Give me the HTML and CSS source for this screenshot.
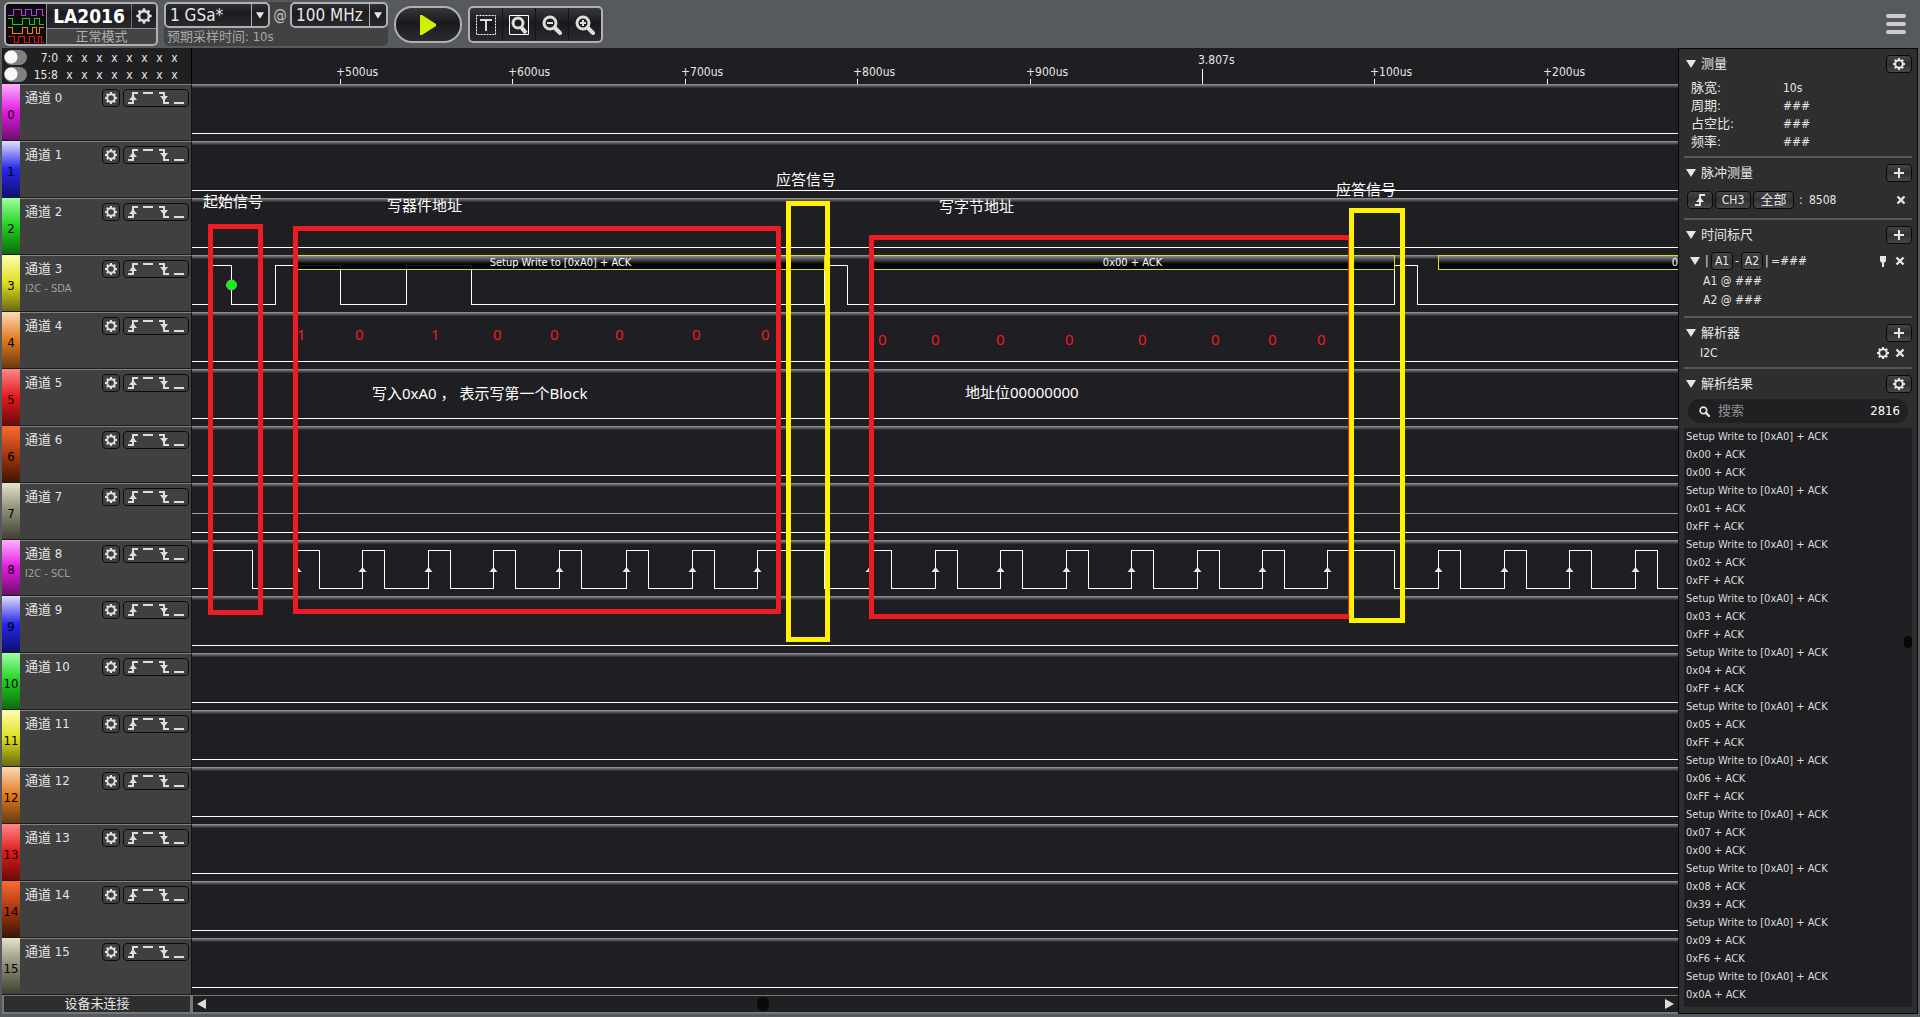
FILE: index.html
```html
<!DOCTYPE html>
<html lang="zh-CN">
<head>
<meta charset="utf-8">
<title>LA2016</title>
<link rel="stylesheet" href="styles.css">
</head>
<body>
<svg class="defs" aria-hidden="true">
  <symbol id="gear" viewBox="0 0 14 14"><path fill="none" stroke="currentColor" stroke-width="2" d="M7 3.2a3.8 3.8 0 1 1 0 7.6a3.8 3.8 0 1 1 0-7.6z"/><path stroke="currentColor" stroke-width="2" d="M7 1v2M7 11v2M1 7h2M11 7h2M2.8 2.8l1.3 1.3M9.9 9.9l1.3 1.3M2.8 11.2l1.3-1.3M9.9 4.1l1.3-1.3"/></symbol>
  <symbol id="rise" viewBox="0 0 12 14"><path fill="none" stroke="currentColor" stroke-width="2" d="M1 12h5V2h5"/><path fill="currentColor" d="M6 4l4 5H2z"/></symbol>
  <symbol id="high" viewBox="0 0 12 14"><path stroke="currentColor" stroke-width="2" d="M1 2h10"/></symbol>
  <symbol id="fall" viewBox="0 0 12 14"><path fill="none" stroke="currentColor" stroke-width="2" d="M1 2h5v10h5"/><path fill="currentColor" d="M6 10l4-5H2z"/></symbol>
  <symbol id="low" viewBox="0 0 12 14"><path stroke="currentColor" stroke-width="2" d="M1 12h10"/></symbol>
  <symbol id="plus" viewBox="0 0 12 12"><path stroke="currentColor" stroke-width="2" d="M1 6h10M6 1v10"/></symbol>
  <symbol id="cross" viewBox="0 0 12 12"><path stroke="currentColor" stroke-width="2.4" d="M2.5 2.5l7 7M9.5 2.5l-7 7"/></symbol>
  <symbol id="tri" viewBox="0 0 10 8"><path fill="currentColor" d="M0 0h10L5 8z"/></symbol>
  <symbol id="lens" viewBox="0 0 20 20"><circle cx="8" cy="8" r="6" fill="none" stroke="currentColor" stroke-width="3"/><path stroke="currentColor" stroke-width="4" stroke-linecap="round" d="M13 13l5 5"/></symbol>
</svg>

<header class="toolbar">
  <div class="device">
    <svg class="logo" viewBox="0 0 40 40" aria-hidden="true">
      <path stroke="#c030f0" d="M2 11h5V5h8v6h4V5h6v6h5V5h6v6h2"/>
      <path stroke="#10d010" d="M2 14h4v6h10v-6h7v6h5v-6h5v6h5"/>
      <path stroke="#f08010" d="M2 23h4v6h10v-6h5v6h5v-6h4v6h3v-6h5"/>
      <path stroke="#e01010" d="M2 32h6v6h4v-6h6v6h5v-6h5v6h4v-6h3v6h3"/>
    </svg>
    <div class="device-main">
      <div class="device-row"><strong>LA2016</strong><button class="device-gear" aria-label="设备设置"><svg width="18" height="18"><use href="#gear"/></svg></button></div>
      <div class="mode">正常模式</div>
    </div>
  </div>
  <div class="sampling">
    <div class="sampling-row">
      <span class="pick depth"><select aria-label="采样深度"><option>1 GSa*</option></select><svg width="8" height="7"><use href="#tri"/></svg></span>
      <span class="at">@</span>
      <span class="pick rate"><select aria-label="采样率"><option>100 MHz</option></select><svg width="8" height="7"><use href="#tri"/></svg></span>
    </div>
    <div class="estimate">预期采样时间: 10s</div>
  </div>
  <button class="play" aria-label="开始"><svg width="18" height="20" viewBox="0 0 18 20"><path fill="#d0f000" d="M1 0h2l14 9v2L3 20H1z"/></svg></button>
  <div class="tools">
    <button aria-label="时间标尺"><svg width="20" height="20" viewBox="0 0 20 20"><path fill="none" stroke="#fff" stroke-dasharray="2 1" d="M.5.5h19v19H.5z"/><path stroke="#ddd" stroke-width="2" d="M4 5h12M10 5v11"/></svg></button>
    <button aria-label="缩放全部"><svg width="20" height="20" viewBox="0 0 20 20"><path fill="none" stroke="#fff" d="M.5.5h19v19H.5z"/><circle cx="9" cy="8" r="5" fill="none" stroke="#ddd" stroke-width="3"/><path stroke="#ddd" stroke-width="4" d="M12 12l5 6"/></svg></button>
    <button aria-label="缩小"><svg width="20" height="20"><use href="#lens"/><path stroke="#ddd" stroke-width="2" d="M5 8h6"/></svg></button>
    <button aria-label="放大"><svg width="20" height="20"><use href="#lens"/><path stroke="#ddd" stroke-width="2" d="M5 8h6M8 5v6"/></svg></button>
  </div>
  <button class="menu" aria-label="菜单"><i></i><i></i><i></i></button>
</header>

<main class="workspace">
  <div class="buses">
    <label class="bus"><input type="checkbox"><span class="bus-name">7:0</span><span class="bits"><b>x</b><b>x</b><b>x</b><b>x</b><b>x</b><b>x</b><b>x</b><b>x</b></span></label>
    <label class="bus"><input type="checkbox"><span class="bus-name">15:8</span><span class="bits"><b>x</b><b>x</b><b>x</b><b>x</b><b>x</b><b>x</b><b>x</b><b>x</b></span></label>
  </div>
  <div class="ruler" id="ruler"></div>
  <div class="channels" id="channels"></div>
  <div class="plot" id="plot"></div>
  <div class="status">设备未连接</div>
  <div class="hscroll">
    <button aria-label="向左"><svg width="9" height="10" viewBox="0 0 9 10"><path fill="#ddd" d="M9 0v10L0 5z"/></svg></button>
    <span class="hthumb"></span>
    <button aria-label="向右"><svg width="9" height="10" viewBox="0 0 9 10"><path fill="#ddd" d="M0 0v10l9-5z"/></svg></button>
  </div>

  <aside class="side">
    <section class="snug">
      <h2><svg width="10" height="8"><use href="#tri"/></svg>测量<button class="key" aria-label="测量设置"><svg width="14" height="14"><use href="#gear"/></svg></button></h2>
      <dl class="measures">
        <dt>脉宽:</dt><dd>10s</dd>
        <dt>周期:</dt><dd>###</dd>
        <dt>占空比:</dt><dd>###</dd>
        <dt>频率:</dt><dd>###</dd>
      </dl>
    </section>
    <section>
      <h2><svg width="10" height="8"><use href="#tri"/></svg>脉冲测量<button class="key" aria-label="添加"><svg width="12" height="12"><use href="#plus"/></svg></button></h2>
      <div class="pulse">
        <button class="key" aria-label="上升沿"><svg width="12" height="14"><use href="#rise"/></svg></button>
        <button class="key ch">CH3</button>
        <button class="key all">全部</button>
        <span class="colon">:</span><span>8508</span>
        <button class="bare end" aria-label="删除"><svg width="12" height="12"><use href="#cross"/></svg></button>
      </div>
    </section>
    <section>
      <h2><svg width="10" height="8"><use href="#tri"/></svg>时间标尺<button class="key" aria-label="添加"><svg width="12" height="12"><use href="#plus"/></svg></button></h2>
      <div class="markers">
        <svg width="10" height="8"><use href="#tri"/></svg><span class="bar">|</span><button class="key mark">A1</button><span>-</span><button class="key mark">A2</button><span class="bar shut">|</span><span>=###</span>
        <button class="bare end" aria-label="固定"><svg width="12" height="12" viewBox="0 0 12 12"><path fill="currentColor" d="M3 1h6v5L7 8v4H5V8L3 6z"/></svg></button>
        <button class="bare" aria-label="删除"><svg width="12" height="12"><use href="#cross"/></svg></button>
      </div>
      <div class="marker-line">A1 @ ###</div>
      <div class="marker-line">A2 @ ###</div>
    </section>
    <section class="snug">
      <h2><svg width="10" height="8"><use href="#tri"/></svg>解析器<button class="key" aria-label="添加"><svg width="12" height="12"><use href="#plus"/></svg></button></h2>
      <div class="decoder">
        <span>I2C</span>
        <button class="bare end" aria-label="解析器设置"><svg width="14" height="14"><use href="#gear"/></svg></button>
        <button class="bare" aria-label="删除"><svg width="12" height="12"><use href="#cross"/></svg></button>
      </div>
    </section>
    <section class="results">
      <h2><svg width="10" height="8"><use href="#tri"/></svg>解析结果<button class="key" aria-label="结果设置"><svg width="14" height="14"><use href="#gear"/></svg></button></h2>
      <label class="search"><svg width="11" height="11"><use href="#lens" width="11" height="11"/></svg><input type="text" placeholder="搜索" aria-label="搜索"><span>2816</span></label>
      <div class="list"><ul id="results"></ul><span class="vthumb"></span></div>
    </section>
  </aside>
</main>
<script src="app.js"></script>
</body>
</html>
```

FILE: styles.css
```css
* { box-sizing: border-box; }

body {
  margin: 0;
  min-height: 100vh;
  display: flex;
  flex-direction: column;
  background: #565a5e;
  color: #e6e6e6;
  font: 12px/18px "DejaVu Sans Condensed", "Noto Sans", "Noto Sans CJK SC", sans-serif;
}

button, input, select { font: inherit; color: inherit; padding: 0; margin: 0; }
button { display: inline-flex; align-items: center; justify-content: center; background: none; border: 0; }
svg { display: block; flex: none; }
.defs { position: absolute; width: 0; height: 0; }

/* toolbar */
.toolbar { display: flex; align-items: flex-start; height: 48px; padding: 2px 14px 0 4px; }
.device {
  display: flex; width: 154px; height: 44px; overflow: hidden;
  border: 2px solid #b0b0b0; border-radius: 5px; background: #444;
}
.logo { width: 41px; height: 40px; background: #0d0d0f; fill: none; stroke-width: 1; shape-rendering: crispEdges; border-right: 1px solid #909090; }
.device-main { flex: 1; display: flex; flex-direction: column; }
.device-row { display: flex; height: 25px; background: linear-gradient(#303036, #1c1c20 40%, #28282e); border-bottom: 1px solid #909090; }
.device-row strong { flex: 1; font-size: 19px; line-height: 24px; text-align: center; color: #fff; }
.device-gear { width: 25px; border-left: 1px solid #707070; color: #ddd; }
.mode { font-size: 13px; line-height: 15px; text-align: center; color: #b0b0b0; }
.sampling { width: 224px; height: 44px; margin-left: 6px; border-radius: 5px; background: #424242; }
.sampling-row { display: flex; justify-content: space-between; }
.pick {
  position: relative; height: 26px; border: 2px solid #b0b0b0; border-radius: 5px;
  background: linear-gradient(#303036, #1c1c20 40%, #28282e);
}
.pick.depth { width: 106px; }
.pick.rate { width: 98px; }
.pick select { appearance: none; width: 100%; height: 22px; padding-left: 4px; border: 0; background: none; font-size: 17px; line-height: 22px; }
.pick::after { content: ""; position: absolute; top: 0; bottom: 0; right: 16px; width: 1px; background: #b0b0b0; }
.pick svg { position: absolute; right: 4px; top: 8px; }
.at { font-size: 15px; line-height: 26px; color: #c0c0c0; }
.estimate { padding-left: 3px; font-size: 13px; color: #a8a8a8; }
.play, .tools {
  height: 37px; margin-top: 4px; border: 2px solid #b0b0b0;
  background: linear-gradient(#36363c, #1a1a1e 45%, #2a2a30);
}
.play { width: 68px; margin-left: 6px; border-radius: 18px; }
.tools { display: flex; width: 135px; margin-left: 6px; border-radius: 5px; color: #ddd; }
.tools button { flex: 1; border-left: 1px solid #141416; }
.tools button:first-child { border-left: 0; }
.menu { flex-direction: column; gap: 4px; margin: 12px 0 0 auto; }
.menu i { width: 20px; height: 4px; border-radius: 2px; background: #ccc; }

/* workspace */
.workspace {
  flex: 1;
  display: grid;
  grid-template-columns: 190px 1fr 240px;
  grid-template-rows: 36px 1fr 19px;
  padding: 0 2px 3px;
}
.side { grid-column: 3; grid-row: 1 / 4; }

.buses { display: flex; flex-direction: column; padding: 1px 0 0 2px; background: #202023; border-right: 1px solid #000; }
.bus { display: flex; align-items: center; height: 17px; }
.bus input { appearance: none; width: 23px; height: 15px; border-radius: 8px; background: radial-gradient(circle at 7px 7px, #f8f8f8 6px, #808080 7px); }
.bus-name { width: 31px; text-align: right; }
.bits { display: flex; margin-left: 4px; }
.bits b { width: 15px; text-align: center; font-weight: normal; }

.ruler { position: relative; background: #1f1f23; overflow: hidden; }
.tick { position: absolute; bottom: 0; width: 1px; height: 5px; background: #fff; font-style: normal; }
.tick.major { height: 15px; }
.tick span { position: absolute; left: -4px; bottom: 3px; white-space: nowrap; }
.tick.major span { bottom: 15px; }

.channels, .plot { display: grid; grid-template-rows: repeat(16, 1fr); }
.channel {
  display: grid; grid-template-columns: 18px 1fr auto auto; min-height: 46px;
  background: #404040; border-top: 1px solid #808080; border-right: 1px solid #111; border-bottom: 1px solid #1c1c1c;
}
.swatch { display: flex; align-items: center; justify-content: center; padding-top: 6px; margin-top: -1px; color: #000; font-size: 13px; }
.c0 { background: linear-gradient(#ffb0ff, #e01ae0 50%, #6a106a); }
.c1 { background: linear-gradient(#e0e0ff, #2626e8 50%, #101070); }
.c2 { background: linear-gradient(#a0ffa0, #1ed01e 50%, #0e6a0e); }
.c3 { background: linear-gradient(#ffffb0, #dede1e 50%, #6a6a10); }
.c4 { background: linear-gradient(#ffd8b8, #e07a20 50%, #6a3a10); }
.c5 { background: linear-gradient(#ff8888, #e01a1a 50%, #6a0c0c); }
.c6 { background: linear-gradient(#ff6a30, #a83810 50%, #401404); }
.c7 { background: linear-gradient(#e4e4cc, #8a8a74 50%, #404034); }
.names { padding: 4px 0 0 5px; white-space: nowrap; }
.names span { display: block; height: 20px; font-size: 13px; }
.names small { display: block; font-size: 11px; line-height: 18px; color: #a0a0a0; }
.cfg, .edges { height: 18px; margin-top: 4px; border: 1px solid #0c0c0c; border-radius: 4px; color: #ddd; }
.cfg { width: 18px; }
.edges { display: flex; justify-content: space-between; width: 66px; margin: 4px 2px 0 3px; padding: 0 3px; }

.plot { position: relative; overflow: hidden; background: #202023; }
.trace { position: relative; min-height: 46px; background: linear-gradient(#8e8c8e 1px, #6a686a 1px 2px, #504e50 2px 3px, #343336 3px 4px, #1f1f23 4px); }
.trace svg { position: absolute; top: 0; left: 0; width: 100%; height: 100%; overflow: visible; }
.wave { fill: none; stroke: #fff; shape-rendering: crispEdges; }
.wave.dim { stroke: #a0a0a0; }
.arrow { fill: #e6e6e6; }
.dot { fill: #00ff00; stroke: #a0a0a0; }
.decode {
  position: absolute; top: 0; height: 15px; border: 1px solid #dede1e;
  background: linear-gradient(#8a8a8a, rgba(0, 0, 0, .88) 60%);
  font-size: 11px; line-height: 13px; text-align: center; color: #fff;
}
.decode.running { right: 0; border-right: 0; text-align: right; }
.box { position: absolute; border: 5px solid #ed1c24; }
.box.ack { border-color: #fff200; }
.note { position: absolute; font: 15px/20px "Noto Sans", "Noto Sans CJK SC", sans-serif; color: #fff; white-space: pre; }
.note.bit { color: #ed1c24; }

.status, .hscroll { border: 2px solid #77777a; border-width: 1px 2px 2px; background: #2e2e2e; }
.status { text-align: center; font-size: 13px; line-height: 16px; }
.hscroll { display: flex; align-items: center; justify-content: space-between; position: relative; padding: 0 4px; border-width: 1px 0 2px 1px; background: #202023; }
.hthumb { position: absolute; left: 38%; width: 12px; height: 14px; border-radius: 5px; background: #0a0a0a; }

/* side panel */
.side {
  display: flex; flex-direction: column; padding: 0 5px 6px;
  background: #2e2e2e; border: 1px solid #080808;
}
.side section { padding: 5px 0 8px; border-bottom: 2px solid #56585c; }
.side section.snug { padding-bottom: 4px; }
.side section:last-child { border-bottom: 0; padding-bottom: 0; }
h2 { display: flex; align-items: center; gap: 5px; height: 20px; margin: 0; padding-left: 2px; font-size: 13px; font-weight: normal; }
.key {
  width: 26px; height: 18px; border: 1px solid #0a0a0a; border-radius: 4px;
  background: linear-gradient(#444446, #303032 50%, #484848);
}
h2 .key { margin-left: auto; }
.measures { display: grid; grid-template-columns: 92px 1fr; margin: 5px 0 0; padding: 0 0 1px 7px; }
.measures dt, .measures dd { margin: 0; height: 18px; }
.measures dt { font-size: 13px; }
.pulse, .markers, .decoder { display: flex; align-items: center; }
.pulse { gap: 2px; height: 18px; margin: 8px 0 1px; padding: 0 5px 0 3px; }
.pulse .ch { width: 36px; }
.pulse .all { width: 41px; font-size: 13px; }
.colon { width: 11px; padding-left: 3px; }
.end { margin-left: auto; }
.markers { gap: 2px; height: 18px; margin-top: 7px; padding: 0 6px; }
.markers .bar { width: 4px; margin-left: 3px; }
.markers .bar.shut { margin-left: 0; }
.markers .mark { width: 22px; }
.markers .end { margin: 0 3px 0 auto; }
.marker-line { height: 19px; padding-left: 19px; line-height: 22px; }
.decoder { gap: 4px; height: 20px; padding: 0 6px 0 16px; }
.results { flex: 1; display: flex; flex-direction: column; }
.search { display: flex; align-items: center; height: 24px; margin: 5px 4px 5px; padding: 0 8px 0 11px; border-radius: 12px; background: #202023; }
.search input { flex: 1; min-width: 0; margin-left: 8px; border: 0; background: none; font-size: 13px; }
.search input::placeholder { color: #909090; }
.search span { font-size: 13px; color: #fff; }
.list { flex: 1; position: relative; background: #1f1f23; }
.list ul { margin: 0; padding: 0 2px; list-style: none; font-size: 11px; color: #dcdcdc; }
.vthumb { position: absolute; right: 0; top: 36%; width: 8px; height: 12px; border-radius: 4px; background: #080808; }
```

FILE: app.js
```js
const el = (tag, cls, text) => {
  const node = document.createElement(tag);
  if (cls) node.className = cls;
  if (text !== undefined) node.textContent = text;
  return node;
};
const icon = (id, w, h) => `<svg width="${w}" height="${h}"><use href="#${id}"/></svg>`;
const $ = id => document.getElementById(id);

// time ruler
[[148, '+500us'], [320, '+600us'], [493, '+700us'], [665, '+800us'], [838, '+900us'],
 [1010, '3.807s', true], [1182, '+100us'], [1355, '+200us']].forEach(([x, text, major]) => {
  const tick = el('i', major ? 'tick major' : 'tick');
  tick.style.left = x + 'px';
  tick.append(el('span', '', text));
  $('ruler').append(tick);
});

// edge positions of the toggling signals, in pixels from the left of the plot
const sda = [17, 39, 83, 148, 214, 279, 632, 655, 1202, 1225];
const scl = [17, 60, 105, 127, 170, 192, 236, 258, 301, 323, 367, 389, 434, 456, 500, 522, 565, 632,
  677, 699, 743, 765, 808, 830, 874, 896, 939, 961, 1005, 1027, 1070, 1092, 1135, 1202,
  1246, 1268, 1312, 1334, 1377, 1399, 1443, 1465];

const wave = (edges, low) => {
  let level = low, d = `M0 ${low + .5}`;
  edges.forEach(x => {
    level = level === low ? 10 : low;
    d += `H${x + .5}V${level + .5}`;
  });
  return `<path class="wave" d="${d}H4000"/>`;
};

const roles = { 3: 'I2C - SDA', 8: 'I2C - SCL' };
for (let i = 0; i < 16; i++) {
  const row = el('div', 'channel');
  row.innerHTML = `<div class="swatch c${i % 8}">${i}</div>
    <div class="names"><span>通道 ${i}</span>${roles[i] ? `<small>${roles[i]}</small>` : ''}</div>
    <button class="cfg" aria-label="通道 ${i} 设置">${icon('gear', 14, 14)}</button>
    <div class="edges"><button aria-label="上升沿">${icon('rise', 12, 14)}</button><button aria-label="高电平">${icon('high', 12, 14)}</button><button aria-label="下降沿">${icon('fall', 12, 14)}</button><button aria-label="低电平">${icon('low', 12, 14)}</button></div>`;
  $('channels').append(row);

  const trace = el('div', 'trace');
  let art = wave(i === 3 ? sda : i === 8 ? scl : [], i === 8 ? 48 : 49);
  if (i === 3) art += '<circle class="dot" cx="39.5" cy="30" r="5"/>';
  if (i === 7) art += '<path class="wave dim" d="M0 30.5H4000"/>';
  if (i === 8) scl.forEach((x, n) => {
    if (n && n % 2 === 0) art += `<path class="arrow" d="M${x + .5} 27l4 5h-8z"/>`;
  });
  trace.innerHTML = `<svg>${art}</svg>`;
  if (i === 3) [[104, 529, 'Setup Write to [0xA0] + ACK'], [678, 525, '0x00 + ACK'], [1246, 0, '0']]
    .forEach(([x, w, text]) => {
      const d = el('div', w ? 'decode' : 'decode running', text);
      d.style.left = x + 'px';
      if (w) d.style.width = w + 'px';
      trace.append(d);
    });
  $('plot').append(trace);
}

// annotations over the plot
const place = (node, x, y, w, h) => {
  node.style.left = x + 'px';
  node.style.top = y + 'px';
  if (w) { node.style.width = w + 'px'; node.style.height = h + 'px'; }
  $('plot').append(node);
};
[[16, 140, 55, 391], [101, 142, 488, 388], [677, 151, 484, 384]].forEach(b => place(el('div', 'box'), ...b));
[[594, 117, 44, 441], [1157, 124, 56, 415]].forEach(b => place(el('div', 'box ack'), ...b));
[[11, 107, '起始信号'], [195, 111, '写器件地址'], [584, 85, '应答信号'], [747, 112, '写字节地址'],
 [1144, 95, '应答信号'], [180, 299, '写入0xA0 ， 表示写第一个Block'], [773, 298, '地址位00000000']]
  .forEach(([x, y, text]) => place(el('span', 'note', text), x, y));
[105, 163, 239, 301, 358, 423, 500, 569].forEach((x, n) => place(el('span', 'note bit', '10100000'[n]), x, 240));
[686, 739, 804, 873, 946, 1019, 1076, 1125].forEach(x => place(el('span', 'note bit', '0'), x, 245));

// decoded bytes: address, data
[['00', '00'], ['01', 'FF'], ['02', 'FF'], ['03', 'FF'], ['04', 'FF'], ['05', 'FF'], ['06', 'FF'],
 ['07', '00'], ['08', '39'], ['09', 'F6'], ['0A']].forEach(bytes => {
  $('results').append(el('li', '', 'Setup Write to [0xA0] + ACK'));
  bytes.forEach(b => $('results').append(el('li', '', `0x${b} + ACK`)));
});
```
